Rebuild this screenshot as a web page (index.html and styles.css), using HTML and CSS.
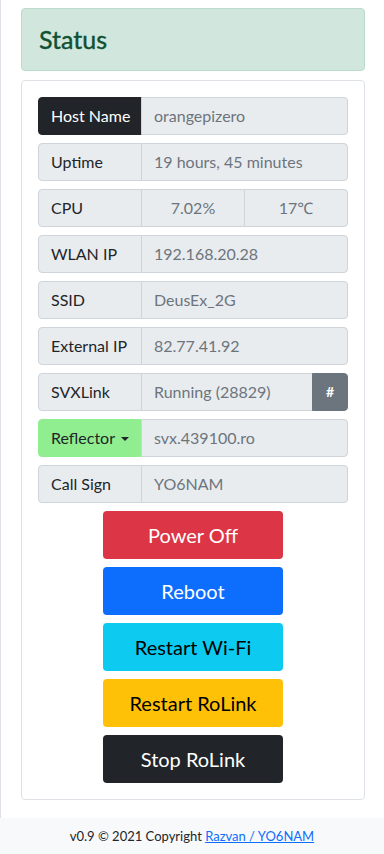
FILE: index.html
```html
<!DOCTYPE html>
<html lang="en">
<head>
<meta charset="utf-8">
<meta name="viewport" content="width=device-width, initial-scale=1">
<title>Status</title>
<link rel="stylesheet" href="styles.css">
</head>
<body>
<div class="page">
  <main class="content">
    <div class="alert">
      <h2 class="title">Status</h2>
    </div>
    <div class="card">
      <div class="row">
        <span class="label label-dark">Host Name</span>
        <span class="value">orangepizero</span>
      </div>
      <div class="row">
        <span class="label">Uptime</span>
        <span class="value">19 hours, 45 minutes</span>
      </div>
      <div class="row">
        <span class="label">CPU</span>
        <span class="value value-center">7.02%</span>
        <span class="value value-center">17℃</span>
      </div>
      <div class="row">
        <span class="label">WLAN IP</span>
        <span class="value">192.168.20.28</span>
      </div>
      <div class="row">
        <span class="label">SSID</span>
        <span class="value">DeusEx_2G</span>
      </div>
      <div class="row">
        <span class="label">External IP</span>
        <span class="value">82.77.41.92</span>
      </div>
      <div class="row">
        <span class="label">SVXLink</span>
        <span class="value">Running (28829)</span>
        <button class="hash">#</button>
      </div>
      <div class="row">
        <button class="label label-green">Reflector <span class="caret"></span></button>
        <span class="value">svx.439100.ro</span>
      </div>
      <div class="row">
        <span class="label">Call Sign</span>
        <span class="value">YO6NAM</span>
      </div>
      <div class="actions">
        <button class="btn btn-red">Power Off</button>
        <button class="btn btn-blue">Reboot</button>
        <button class="btn btn-cyan">Restart Wi-Fi</button>
        <button class="btn btn-yellow">Restart RoLink</button>
        <button class="btn btn-dark">Stop RoLink</button>
      </div>
    </div>
  </main>
  <footer class="footer">
    v0.9 © 2021 Copyright <a href="#">Razvan / YO6NAM</a>
  </footer>
</div>
</body>
</html>
```
FILE: styles.css
```css
* { box-sizing: border-box; }
html, body { margin: 0; padding: 0; }
body {
  font-family: Lato, "Noto Sans", sans-serif;
  font-size: 16px;
  line-height: 1.5;
  color: #212529;
  background: #fff;
}
.page {
  min-height: 854px;
  display: flex;
  flex-direction: column;
}
.content {
  border-left: 1px solid #dee2e6;
  padding: 8px 19px 18px 20px;
  flex: 1;
}
.alert {
  background: #d1e7dd;
  border: 1px solid #badbcc;
  border-radius: 4px;
  padding: 16px 16px 16px 17px;
  margin-bottom: 9px;
}
.title {
  margin: 0;
  font-size: 25px;
  font-weight: 400;
  line-height: 29px;
  color: #0f5132;
  -webkit-text-stroke: 0.4px #0f5132;
}
.card {
  border: 1px solid #dee2e6;
  border-radius: 4px;
  padding: 16px;
}
.row {
  display: flex;
  height: 38px;
  margin-bottom: 8px;
}
.label, .value, .hash {
  font-family: inherit;
  font-size: 16px;
  line-height: 24px;
  border: 1px solid #ced4da;
  padding: 6px 12px;
  white-space: nowrap;
}
.label {
  width: 104px;
  flex: none;
  background: #e9ecef;
  color: #212529;
  border-radius: 4px 0 0 4px;
  text-align: left;
}
.label-dark {
  background: #212529;
  border-color: #212529;
  color: #fff;
}
.label-green {
  background: #90ee90;
  border-color: #90ee90;
  cursor: pointer;
}
.caret {
  display: inline-block;
  width: 0;
  height: 0;
  margin-left: 2px;
  vertical-align: 3px;
  border-top: 4px solid #212529;
  border-left: 4px solid transparent;
  border-right: 4px solid transparent;
}
.value {
  flex: 1;
  margin-left: -1px;
  background: #e9ecef;
  color: #6c757d;
  border-radius: 0 4px 4px 0;
}
.row .value:not(:last-child) {
  border-radius: 0;
}
.value-center { text-align: center; }
.hash {
  width: 36px;
  flex: none;
  margin-left: -1px;
  background: #6c757d;
  border-color: #6c757d;
  color: #fff;
  font-size: 14px;
  font-weight: 700;
  padding: 6px 0;
  text-align: center;
  border-radius: 0 4px 4px 0;
}
.actions {
  display: flex;
  flex-direction: column;
  align-items: center;
  gap: 8px;
}
.btn {
  width: 180px;
  height: 48px;
  font-family: inherit;
  font-size: 20px;
  line-height: 30px;
  padding: 8px 16px;
  border: 1px solid transparent;
  border-radius: 4px;
  cursor: pointer;
}
.btn-red { background: #dc3545; color: #fff; }
.btn-blue { background: #0d6efd; color: #fff; }
.btn-cyan { background: #0dcaf0; color: #000; }
.btn-yellow { background: #ffc107; color: #000; }
.btn-dark { background: #212529; color: #fff; }
.footer {
  background: #f8f9fa;
  text-align: center;
  font-size: 13px;
  line-height: 20px;
  padding: 8px 0 8px;
  color: #212529;
}
.footer a { color: #0d6efd; }
```
